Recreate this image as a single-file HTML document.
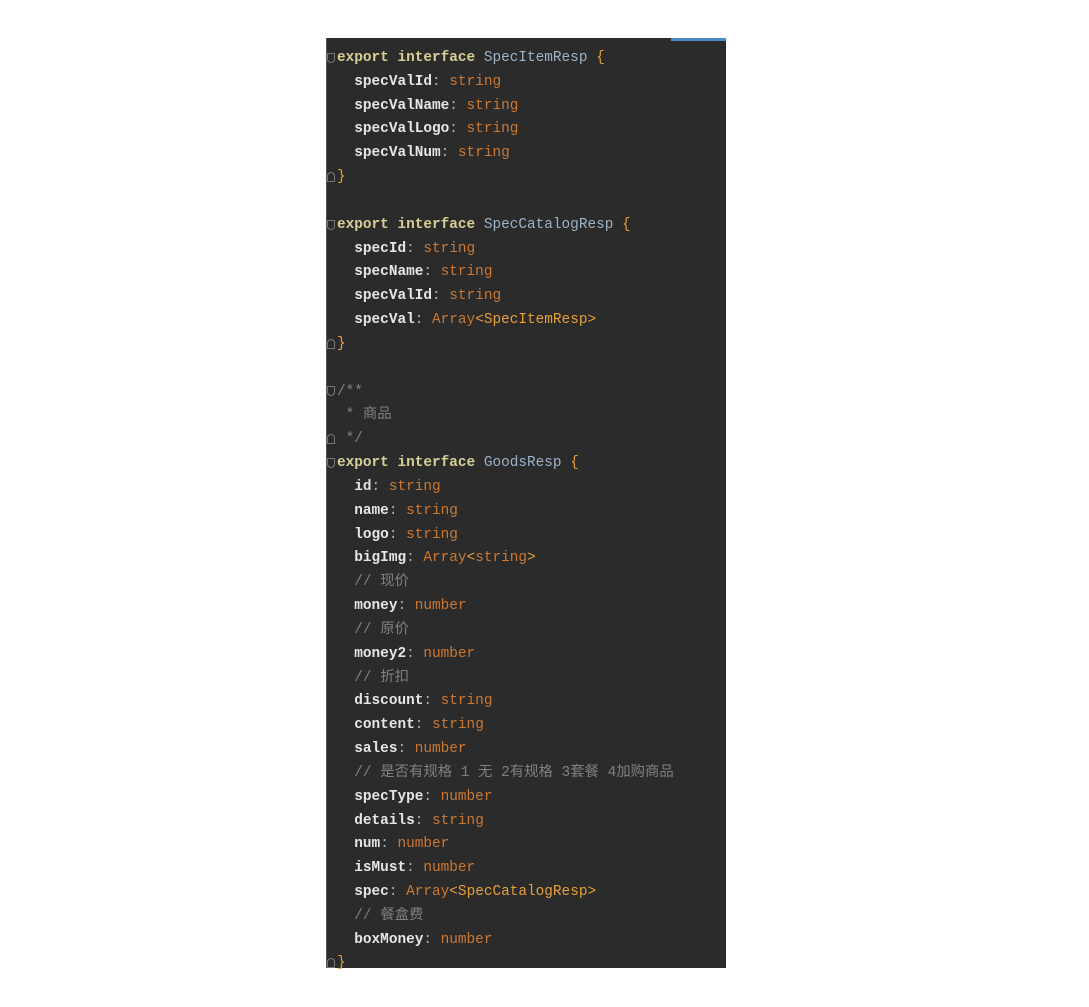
<!DOCTYPE html>
<html><head><meta charset="utf-8"><style>
body{margin:0;background:#fff;width:1089px;height:1007px;position:relative;overflow:hidden}
#p{position:absolute;left:326px;top:38px;width:400px;height:930px;background:#2b2b2b}
#bar{position:absolute;left:671px;top:38px;width:55px;height:3px;background:#4a88c7}
#g{position:absolute;left:326px;top:38px;width:1px;height:930px;background:#555}
pre{position:absolute;left:337px;top:47px;margin:0;font-family:"Liberation Mono","Noto Sans CJK SC",monospace;font-size:14.4px;line-height:23.83px;color:#e6e6e6;font-weight:bold}
.k{color:#d8cf95}.t{color:#9cb3c9;font-weight:normal}.s{color:#cc7832;font-weight:normal}.b{color:#e8a03a;font-weight:normal}.c{color:#808080;font-weight:normal}
.f{position:absolute;left:327px;width:8px;height:10px;border:1px solid #777;border-radius:0 0 4px 4px;box-sizing:border-box}
</style></head><body>
<div id="p"></div><div id="bar"></div><div id="g"></div>
<pre><span class="k">export interface</span> <span class="t">SpecItemResp</span> <span class="b">{</span>
  specValId<span class="t">:</span> <span class="s">string</span>
  specValName<span class="t">:</span> <span class="s">string</span>
  specValLogo<span class="t">:</span> <span class="s">string</span>
  specValNum<span class="t">:</span> <span class="s">string</span>
<span class="b">}</span>

<span class="k">export interface</span> <span class="t">SpecCatalogResp</span> <span class="b">{</span>
  specId<span class="t">:</span> <span class="s">string</span>
  specName<span class="t">:</span> <span class="s">string</span>
  specValId<span class="t">:</span> <span class="s">string</span>
  specVal<span class="t">:</span> <span class="s">Array</span><span class="b">&lt;SpecItemResp&gt;</span>
<span class="b">}</span>

<span class="c">/**
 * 商品
 */</span>
<span class="k">export interface</span> <span class="t">GoodsResp</span> <span class="b">{</span>
  id<span class="t">:</span> <span class="s">string</span>
  name<span class="t">:</span> <span class="s">string</span>
  logo<span class="t">:</span> <span class="s">string</span>
  bigImg<span class="t">:</span> <span class="s">Array</span><span class="b">&lt;</span><span class="s">string</span><span class="b">&gt;</span>
  <span class="c">// 现价</span>
  money<span class="t">:</span> <span class="s">number</span>
  <span class="c">// 原价</span>
  money2<span class="t">:</span> <span class="s">number</span>
  <span class="c">// 折扣</span>
  discount<span class="t">:</span> <span class="s">string</span>
  content<span class="t">:</span> <span class="s">string</span>
  sales<span class="t">:</span> <span class="s">number</span>
  <span class="c">// 是否有规格 1 无 2有规格 3套餐 4加购商品</span>
  specType<span class="t">:</span> <span class="s">number</span>
  details<span class="t">:</span> <span class="s">string</span>
  num<span class="t">:</span> <span class="s">number</span>
  isMust<span class="t">:</span> <span class="s">number</span>
  spec<span class="t">:</span> <span class="s">Array</span><span class="b">&lt;SpecCatalogResp&gt;</span>
  <span class="c">// 餐盒费</span>
  boxMoney<span class="t">:</span> <span class="s">number</span>
<span class="b">}</span></pre>
<div class="f" style="top:53px"></div><div class="f" style="top:172px;border-radius:4px 4px 0 0"></div>
<div class="f" style="top:220px"></div><div class="f" style="top:339px;border-radius:4px 4px 0 0"></div>
<div class="f" style="top:386px"></div><div class="f" style="top:434px;border-radius:4px 4px 0 0"></div>
<div class="f" style="top:458px"></div><div class="f" style="top:958px;border-radius:4px 4px 0 0"></div>
</body></html>
